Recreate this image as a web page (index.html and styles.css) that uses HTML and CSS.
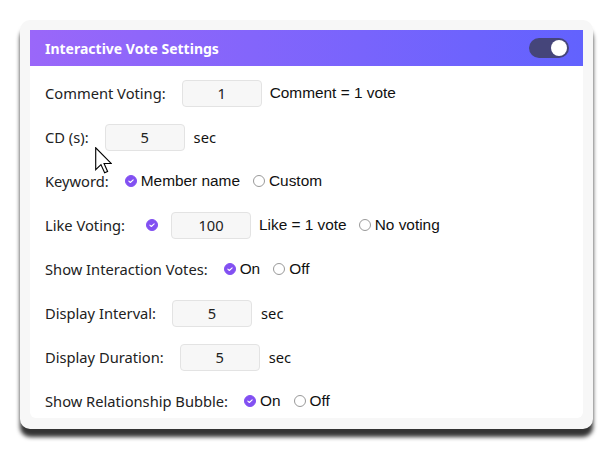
FILE: index.html
```html
<!DOCTYPE html>
<html>
<head>
<meta charset="utf-8">
<link rel="stylesheet" href="styles.css">
</head>
<body>
<div class="card">
  <div class="panel">
    <div class="header">
      <span class="title">Interactive Vote Settings</span>
      <span class="toggle"><span class="knob"></span></span>
    </div>
    <div class="rows">
      <div class="row">
        <span class="label">Comment Voting:</span>
        <span class="input">1</span>
        <span class="txt">Comment = 1 vote</span>
      </div>
      <div class="row">
        <span class="label">CD (s):</span>
        <span class="input">5</span>
        <span class="txt unit">sec</span>
      </div>
      <div class="row">
        <span class="label">Keyword:</span>
        <span class="opt"><span class="radio on"><svg viewBox="0 0 12 12"><path d="M3.4 6.2 L5.2 7.8 L8.6 4.6" /></svg></span><span class="txt">Member name</span></span>
        <span class="opt"><span class="radio"></span><span class="txt">Custom</span></span>
      </div>
      <div class="row">
        <span class="label">Like Voting:</span>
        <span class="radio on solo"><svg viewBox="0 0 12 12"><path d="M3.4 6.2 L5.2 7.8 L8.6 4.6" /></svg></span>
        <span class="input">100</span>
        <span class="txt">Like = 1 vote</span>
        <span class="opt"><span class="radio"></span><span class="txt">No voting</span></span>
      </div>
      <div class="row">
        <span class="label">Show Interaction Votes:</span>
        <span class="opt"><span class="radio on"><svg viewBox="0 0 12 12"><path d="M3.4 6.2 L5.2 7.8 L8.6 4.6" /></svg></span><span class="txt">On</span></span>
        <span class="opt"><span class="radio"></span><span class="txt">Off</span></span>
      </div>
      <div class="row">
        <span class="label">Display Interval:</span>
        <span class="input">5</span>
        <span class="txt unit">sec</span>
      </div>
      <div class="row">
        <span class="label">Display Duration:</span>
        <span class="input">5</span>
        <span class="txt unit">sec</span>
      </div>
      <div class="row">
        <span class="label">Show Relationship Bubble:</span>
        <span class="opt"><span class="radio on"><svg viewBox="0 0 12 12"><path d="M3.4 6.2 L5.2 7.8 L8.6 4.6" /></svg></span><span class="txt">On</span></span>
        <span class="opt"><span class="radio"></span><span class="txt">Off</span></span>
      </div>
    </div>
  </div>
  <svg class="cursor" viewBox="0 0 12 19" width="17" height="27"><path d="M0.5 0.5 L0.5 16 L4.2 12.4 L6.8 18.2 L8.9 17.3 L6.4 11.6 L11.4 11.6 Z" fill="#fff" stroke="#000" stroke-width="0.8" stroke-linejoin="miter"/></svg>
</div>
</body>
</html>
```
FILE: styles.css
```css
* { box-sizing: border-box; }
html, body { margin: 0; padding: 0; background: #fff; }
body { padding: 20px 0 0 20px; width: 613px; height: 450px; overflow: hidden; }
.card {
  position: relative;
  width: 573px;
  height: 409px;
  background: #f7f7f7;
  border-radius: 10px;
  padding: 10px;
  box-shadow: 0 8px 4px rgba(0,0,0,0.8);
}
.panel {
  background: #fff;
  height: 388px;
  border-radius: 0 0 6px 6px;
  overflow: hidden;
}
.header {
  height: 36px;
  background: linear-gradient(90deg, #9a67f9, #6262fe);
  display: flex;
  align-items: center;
  justify-content: space-between;
  padding: 0 14px 0 15px;
}
.title {
  color: #fff;
  font-family: "Noto Sans", sans-serif;
  font-weight: bold;
  font-size: 14px;
}
.toggle {
  width: 40px;
  height: 20px;
  border-radius: 10px;
  background: #45457a;
  display: flex;
  justify-content: flex-end;
  align-items: center;
  padding: 0 2px;
}
.knob { width: 16px; height: 16px; border-radius: 50%; background: #fff; }
.rows {
  display: flex;
  flex-direction: column;
  gap: 16px;
  padding: 13px 15px 0 15px;
}
.row {
  height: 28px;
  display: flex;
  align-items: center;
}
.label {
  font-family: "Noto Sans", sans-serif;
  font-size: 14.7px;
  color: #222;
  margin-right: 16px;
}
.input {
  width: 80px;
  height: 27px;
  background: #f7f7f7;
  border: 1px solid #e3e3e3;
  border-radius: 4px;
  display: flex;
  align-items: center;
  justify-content: center;
  font-family: "Noto Sans", sans-serif;
  font-size: 14.7px;
  color: #222;
  margin-right: 8px;
}
.txt {
  font-family: "Liberation Sans", Arial, sans-serif;
  font-size: 15.4px;
  color: #111;
}
.unit { font-family: "Noto Sans", sans-serif; font-size: 14.7px; margin-left: 1px; }
.row .txt + .opt { margin-left: 12px; }
.opt { display: flex; align-items: center; margin-right: 13px; }
.radio {
  width: 12px;
  height: 12px;
  border-radius: 50%;
  border: 1px solid #999;
  margin-right: 4px;
  display: flex;
  background: #fff;
}
.radio.on { background: #8250f2; border-color: #8250f2; }
.radio svg { width: 10px; height: 10px; }
.radio svg path { fill: none; stroke: #fff; stroke-width: 1.3; stroke-linecap: round; stroke-linejoin: round; }
.radio.solo { margin-left: 5px; margin-right: 13px; }
.cursor { position: absolute; left: 75px; top: 127px; }
```
